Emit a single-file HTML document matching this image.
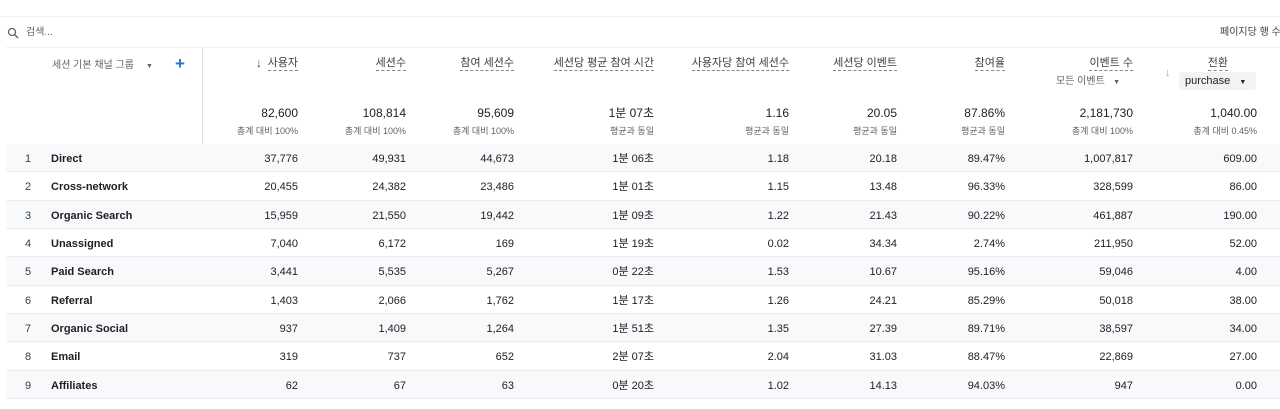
<!DOCTYPE html>
<html><head><meta charset="utf-8"><style>
body{margin:0;width:1280px;height:409px;background:#fff;font-family:"Liberation Sans","Noto Sans CJK KR",sans-serif;color:#202124;position:relative;overflow:hidden}
.a{position:absolute;white-space:nowrap;line-height:13px}
.r{text-align:right}
.hd{font-size:11px;color:#3c4043;border-bottom:1px dashed #80868b;line-height:13px}
.tot{font-size:12px;color:#202124}
.sub{font-size:9px;color:#5f6368}
.row{position:absolute;left:6px;width:1274px;border-bottom:1px solid #e8eaed}
.c{position:absolute;font-size:11px;top:8px;line-height:13px;height:13px;text-align:right;white-space:nowrap}
</style></head><body>
<div class="a" style="left:0;top:16px;width:1280px;border-top:1px solid #eef0f2"></div>
<svg class="a" style="left:7px;top:27px" width="12" height="12" viewBox="0 0 12 12"><circle cx="5" cy="5" r="3.5" fill="none" stroke="#5f6368" stroke-width="1.3"/><path d="M7.6 7.6L11 11" stroke="#5f6368" stroke-width="1.4"/></svg>
<div class="a" style="left:26px;top:26px;font-size:10px;color:#5f6368">검색...</div>
<div class="a" style="left:1220px;top:26px;font-size:10px;color:#3c4043">페이지당 행 수</div>
<div class="a" style="left:6px;top:47px;width:1274px;border-top:1px solid #eef0f2"></div>
<div class="a" style="left:202px;top:48px;height:351px;border-left:1px solid #e0e0e0"></div>
<div class="a" style="left:52px;top:59px;font-size:10px;color:#5f6368">세션 기본 채널 그룹</div>
<div class="a" style="left:146px;top:60px;font-size:7px;color:#5f6368">▼</div>
<div class="a" style="left:175px;top:57px;font-size:17px;color:#1a73e8;font-weight:bold">+</div>
<div id="hdr"></div>
<div id="rows"></div>
<script>
const R=[298,406,514,654,789,897,1005,1133,1257];
const H=["사용자","세션수","참여 세션수","세션당 평균 참여 시간","사용자당 참여 세션수","세션당 이벤트","참여율","이벤트 수","전환"];
const T=["82,600","108,814","95,609","1분 07초","1.16","20.05","87.86%","2,181,730","1,040.00"];
const S=["총계 대비 100%","총계 대비 100%","총계 대비 100%","평균과 동일","평균과 동일","평균과 동일","평균과 동일","총계 대비 100%","총계 대비 0.45%"];
let h="";
R.forEach((r,i)=>{
 let rr=1280-r;
 if(i==8) rr=1280-1228;
 h+=`<div class="a hd" style="right:${rr}px;top:57px">${H[i]}</div>`;
 h+=`<div class="a r tot" style="right:${1280-r}px;top:107px">${T[i]}</div>`;
 h+=`<div class="a r sub" style="right:${1280-r}px;top:125px">${S[i]}</div>`;
});
h+=`<div class="a" style="left:256px;top:57px;font-size:12px;color:#3c4043">↓</div>`;
h+=`<div class="a" style="left:1056px;top:75px;font-size:10px;color:#5f6368">모든 이벤트 &nbsp; <span style="font-size:7px">▼</span></div>`;
h+=`<div class="a" style="left:1165px;top:67px;font-size:11px;color:#9aa0a6">↓</div>`;
h+=`<div class="a" style="left:1179px;top:72px;width:77px;height:18px;background:#f1f3f4;border-radius:3px"></div>`;
h+=`<div class="a" style="left:1185px;top:75px;font-size:11px;color:#202124">purchase &nbsp; <span style="font-size:7px">▼</span></div>`;
document.getElementById("hdr").innerHTML=h;
const D=[["Direct","37,776","49,931","44,673","1분 06초","1.18","20.18","89.47%","1,007,817","609.00"],
["Cross-network","20,455","24,382","23,486","1분 01초","1.15","13.48","96.33%","328,599","86.00"],
["Organic Search","15,959","21,550","19,442","1분 09초","1.22","21.43","90.22%","461,887","190.00"],
["Unassigned","7,040","6,172","169","1분 19초","0.02","34.34","2.74%","211,950","52.00"],
["Paid Search","3,441","5,535","5,267","0분 22초","1.53","10.67","95.16%","59,046","4.00"],
["Referral","1,403","2,066","1,762","1분 17초","1.26","24.21","85.29%","50,018","38.00"],
["Organic Social","937","1,409","1,264","1분 51초","1.35","27.39","89.71%","38,597","34.00"],
["Email","319","737","652","2분 07초","2.04","31.03","88.47%","22,869","27.00"],
["Affiliates","62","67","63","0분 20초","1.02","14.13","94.03%","947","0.00"]];
let s="";
D.forEach((d,k)=>{
 let top=Math.round(144+k*28.35), nx=Math.round(144+(k+1)*28.35);
 s+=`<div class="row" style="top:${top}px;height:${nx-top-1}px;background:${k%2==0?'#f8f9fa':'#fff'}">`;
 s+=`<div class="c" style="top:9px;left:19px;color:#3c4043;text-align:left">${k+1}</div><div class="c" style="top:9px;left:45px;font-weight:bold;text-align:left">${d[0]}</div>`;
 R.forEach((r,i)=>{s+=`<div class="c" style="top:9px;right:${1280-r}px">${d[i+1]}</div>`});
 s+=`</div>`;
});
document.getElementById("rows").innerHTML=s;
</script>
</body></html>
